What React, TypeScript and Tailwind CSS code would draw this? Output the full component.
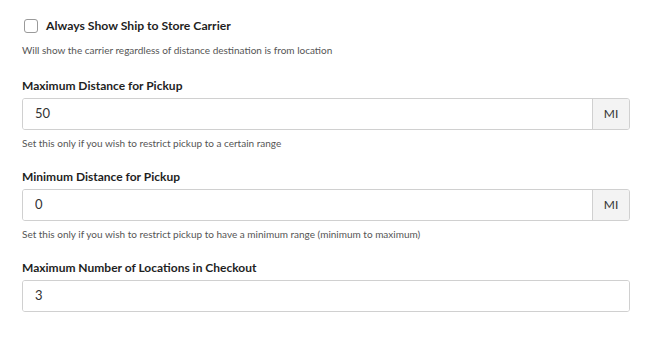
import React from "react";

const font = { fontFamily: "Lato, 'Noto Sans', sans-serif" };

function Field({
  label,
  value,
  unit,
  help,
}: {
  label: string;
  value: string;
  unit?: string;
  help?: string;
}) {
  return (
    <div className="flex flex-col">
      <label className="text-[12px] font-bold text-[#1f1f1f] leading-[16px] mb-[4px]">{label}</label>
      <div className="flex h-[32px] w-full rounded-[3px] border border-[#d0d0d0] overflow-hidden">
        <input
          defaultValue={value}
          className="flex-1 min-w-0 px-[12px] text-[13px] text-[#333] outline-none bg-white"
          style={font}
        />
        {unit && (
          <div className="w-[37px] flex items-center justify-center border-l border-[#d0d0d0] bg-[#f3f3f3] text-[12px] text-[#333]">
            {unit}
          </div>
        )}
      </div>
      {help && <p className="text-[10px] text-[#555] leading-[14px] mt-[6px]">{help}</p>}
    </div>
  );
}

export default function App() {
  return (
    <div className="w-[670px] h-[341px] bg-white pl-[22px] pr-[40px] pt-[18px]" style={font}>
      <div className="flex items-center gap-[8px] pl-[2px]">
        <div className="w-[14px] h-[14px] rounded-[3px] border border-[#9a9a9a] bg-white" />
        <span className="text-[12.2px] font-bold text-[#1f1f1f] leading-[16px]">Always Show Ship to Store Carrier</span>
      </div>
      <p className="text-[10px] text-[#555] leading-[14px] mt-[9px]">
        Will show the carrier regardless of distance destination is from location
      </p>
      <div className="mt-[21px] flex flex-col gap-[19px]">
        <Field
          label="Maximum Distance for Pickup"
          value="50"
          unit="MI"
          help="Set this only if you wish to restrict pickup to a certain range"
        />
        <Field
          label="Minimum Distance for Pickup"
          value="0"
          unit="MI"
          help="Set this only if you wish to restrict pickup to have a minimum range (minimum to maximum)"
        />
        <Field label="Maximum Number of Locations in Checkout" value="3" />
      </div>
    </div>
  );
}
